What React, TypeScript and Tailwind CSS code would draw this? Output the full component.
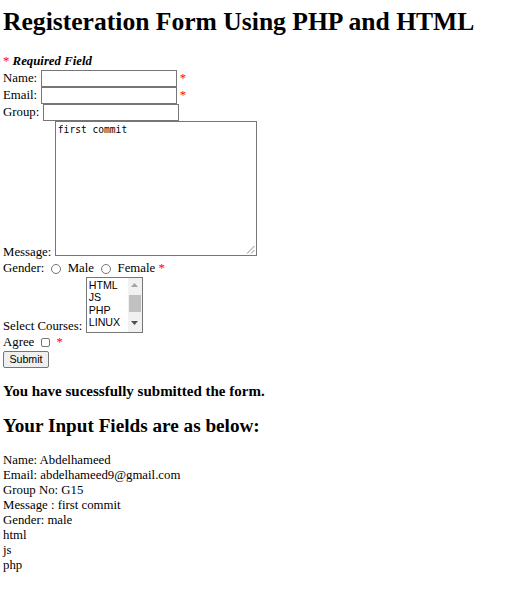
import React from "react";

const Star = ({ className = "" }: { className?: string }) => (
  <span className={"text-[#ff0000] " + className}>*</span>
);

export default function App() {
  return (
    <div className="min-h-[595px] bg-white pl-[3px] font-['Liberation_Serif',serif] text-[12.8px] leading-[15px] text-black">
      <h1 className="pt-[7px] text-[25.6px] font-bold leading-[30px]">
        Registeration Form Using PHP and HTML
      </h1>

      <div className="mt-[17px] flex h-[15px] items-center">
        <Star />
        <b className="ml-[3.2px] italic">Required Field</b>
      </div>

      <form onSubmit={(e) => e.preventDefault()}>
        <div className="mt-[1px] flex h-[17px] items-center">
          <span>Name:</span>
          <input
            type="text"
            className="ml-[3.5px] h-[17px] w-[136px] border border-[#767676] bg-white px-[2px] font-['Liberation_Sans',sans-serif] text-[10.67px] outline-none"
          />
          <Star className="ml-[3.2px]" />
        </div>
        <div className="flex h-[17px] items-center">
          <span>Email:</span>
          <input
            type="text"
            className="ml-[3.5px] h-[17px] w-[136px] border border-[#767676] bg-white px-[2px] font-['Liberation_Sans',sans-serif] text-[10.67px] outline-none"
          />
          <Star className="ml-[3.2px]" />
        </div>
        <div className="flex h-[17px] items-center">
          <span>Group:</span>
          <input
            type="text"
            className="ml-[3.5px] h-[17px] w-[136px] border border-[#767676] bg-white px-[2px] font-['Liberation_Sans',sans-serif] text-[10.67px] outline-none"
          />
        </div>

        <div className="flex items-end">
          <span className="translate-y-[1px]">Message:</span>
          <div className="relative mb-[3px] ml-[3.5px] h-[135px] w-[202px] border border-[#767676] bg-white px-[2px] pt-[2px] font-['DejaVu_Sans_Mono',monospace] text-[9.6px] leading-[12px]">
            first commit
            <svg
              className="absolute bottom-[1px] right-[1px]"
              width="9"
              height="9"
              viewBox="0 0 9 9"
            >
              <line x1="8.5" y1="1" x2="1" y2="8.5" stroke="#8a8a8a" strokeWidth="1" />
              <line x1="8.5" y1="5" x2="5" y2="8.5" stroke="#8a8a8a" strokeWidth="1" />
            </svg>
          </div>
        </div>

        <div className="mt-[2px] flex h-[15px] items-center">
          <span>Gender:</span>
          <span className="ml-[7px] h-[10px] w-[10px] rounded-full border border-[#767676] bg-white" />
          <span className="ml-[6.5px]">Male</span>
          <span className="ml-[7px] h-[10px] w-[10px] rounded-full border border-[#767676] bg-white" />
          <span className="ml-[6.5px]">Female</span>
          <Star className="ml-[3.2px]" />
        </div>

        <div className="flex items-end">
          <span className="translate-y-[1px]">Select Courses:</span>
          <div className="ml-[3.5px] mt-[1px] flex h-[56px] w-[57px] border border-[#767676] bg-white">
            <div className="flex-1 pl-[2px] pt-[0.5px] font-['Liberation_Sans',sans-serif] text-[10.67px] leading-[12.6px]">
              <div>HTML</div>
              <div>JS</div>
              <div>PHP</div>
              <div>LINUX</div>
            </div>
            <div className="flex w-[14px] flex-col bg-[#f1f1f1]">
              <div className="flex h-[14px] items-center justify-center">
                <svg width="7" height="4" viewBox="0 0 7 4">
                  <polygon points="0,4 7,4 3.5,0" fill="#a3a3a3" />
                </svg>
              </div>
              <div className="flex-1">
                <div className="mx-[1px] mt-[3px] h-[17px] bg-[#c1c1c1]" />
              </div>
              <div className="flex h-[14px] justify-center pt-[3px]">
                <svg width="7" height="4" viewBox="0 0 7 4">
                  <polygon points="0,0 7,0 3.5,4" fill="#505050" />
                </svg>
              </div>
            </div>
          </div>
        </div>

        <div className="mt-[2px] flex h-[15px] items-center">
          <span>Agree</span>
          <span className="ml-[6.5px] h-[9.5px] w-[9.5px] rounded-[2px] border border-[#767676] bg-white" />
          <Star className="ml-[6.2px]" />
        </div>

        <button
          type="submit"
          className="mt-[1px] flex h-[16.5px] items-center rounded-[2px] border border-[#767676] bg-[#efefef] px-[5.4px] font-['Liberation_Sans',sans-serif] text-[10.67px] leading-[12px] text-black"
        >
          Submit
        </button>
      </form>

      <h3 className="mt-[15px] text-[15px] font-bold leading-[17.2px]">
        You have sucessfully submitted the form.
      </h3>

      <h2 className="mt-[15px] text-[19.2px] font-bold leading-[22px]">
        Your Input Fields are as below:
      </h2>

      <div className="mt-[16px]">
        <div>Name: Abdelhameed</div>
        <div>Email: abdelhameed9@gmail.com</div>
        <div>Group No: G15</div>
        <div>Message : first commit</div>
        <div>Gender: male</div>
        <div>html</div>
        <div>js</div>
        <div>php</div>
      </div>
    </div>
  );
}
